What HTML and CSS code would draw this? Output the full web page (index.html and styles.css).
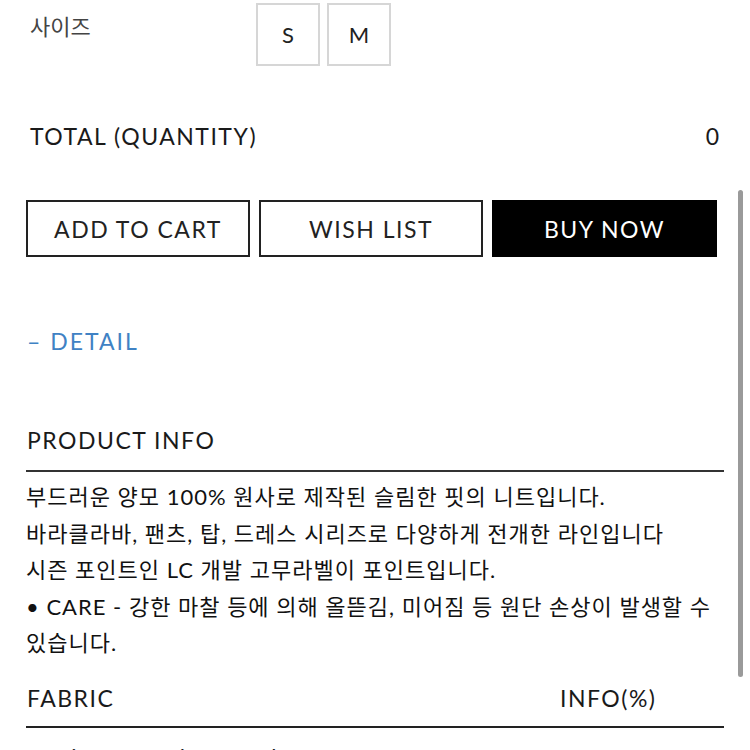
FILE: index.html
```html
<!DOCTYPE html>
<html lang="ko">
<head>
<meta charset="utf-8">
<link rel="stylesheet" href="styles.css">
</head>
<body>
<div class="page">
  <div class="size-row">
    <div class="size-label">사이즈</div>
    <div class="size-options">
      <div class="size-box">S</div>
      <div class="size-box">M</div>
    </div>
  </div>

  <div class="total-row">
    <span class="total-label">TOTAL (QUANTITY)</span>
    <span class="total-value">0</span>
  </div>

  <div class="actions">
    <div class="btn">ADD TO CART</div>
    <div class="btn">WISH LIST</div>
    <div class="btn btn-dark">BUY NOW</div>
  </div>

  <div class="detail-toggle">– DETAIL</div>

  <div class="section-head">PRODUCT INFO</div>
  <div class="info-text">
    <p>부드러운 양모 100% 원사로 제작된 슬림한 핏의 니트입니다.</p>
    <p>바라클라바, 팬츠, 탑, 드레스 시리즈로 다양하게 전개한 라인입니다</p>
    <p>시즌 포인트인 LC 개발 고무라벨이 포인트입니다.</p>
    <p>• CARE - 강한 마찰 등에 의해 올뜯김, 미어짐 등 원단 손상이 발생할 수 있습니다.</p>
  </div>

  <div class="fabric-head">
    <span>FABRIC</span>
    <span class="fabric-info">INFO(%)</span>
  </div>
  <div class="fabric-row">
    <span>Merino Extrafine Wool</span>
    <span class="fabric-info">100</span>
  </div>
</div>
<div class="scrollbar"></div>
</body>
</html>
```

FILE: styles.css
```css
html, body {
  margin: 0;
  padding: 0;
  background: #fff;
  overflow: hidden;
}
body {
  font-family: Lato, "Noto Sans CJK KR", sans-serif;
  color: #1a1a1a;
  width: 750px;
  height: 750px;
  position: relative;
}
.page {
  padding: 3px 26px 0 26px;
  width: 698px;
}
.size-row {
  display: flex;
  align-items: flex-start;
}
.size-label {
  width: 226px;
  padding-left: 4px;
  padding-top: 12px;
  font-size: 22px;
  color: #444;
  line-height: 24px;
}
.size-options {
  display: flex;
  gap: 7px;
}
.size-box {
  width: 60px;
  height: 59px;
  border: 2px solid #d6d6d6;
  display: flex;
  align-items: center;
  justify-content: center;
  font-size: 22px;
  color: #222;
}
.total-row {
  display: flex;
  justify-content: space-between;
  margin-top: 58px;
  padding: 0 5px 0 4px;
  font-size: 23px;
  line-height: 24px;
  letter-spacing: 1.5px;
  color: #1a1a1a;
}
.total-value {
  letter-spacing: 0;
}
.actions {
  display: grid;
  grid-template-columns: 224px 224px 225px;
  gap: 9px;
  margin-top: 52px;
  width: 690px;
}
.btn {
  height: 53px;
  border: 2px solid #222;
  display: flex;
  align-items: center;
  justify-content: center;
  font-size: 23px;
  letter-spacing: 1.5px;
  color: #222;
}
.btn-dark {
  background: #000;
  border-color: #000;
  color: #fff;
}
.detail-toggle {
  margin-top: 72px;
  padding-left: 1px;
  font-size: 23px;
  line-height: 24px;
  letter-spacing: 2px;
  color: #3f82c4;
}
.section-head {
  margin-top: 75px;
  padding-left: 1px;
  font-size: 23px;
  line-height: 24px;
  letter-spacing: 1.5px;
  color: #1a1a1a;
  padding-bottom: 18px;
  border-bottom: 2px solid #333;
}
.info-text {
  padding-top: 7px;
  font-size: 22px;
  line-height: 36.5px;
  letter-spacing: 1px;
  color: #111;
}
.info-text p {
  margin: 0;
}
.fabric-head {
  display: flex;
  margin-top: 24px;
  font-size: 23px;
  line-height: 24px;
  letter-spacing: 1.5px;
  padding: 0 0 16px 1px;
  border-bottom: 2px solid #222;
}
.fabric-row {
  display: flex;
  padding: 17px 0 0 1px;
  font-size: 22px;
  line-height: 24px;
  letter-spacing: 1.5px;
}
.fabric-info {
  margin-left: auto;
  width: 164px;
}
.scrollbar {
  position: absolute;
  left: 738px;
  top: 190px;
  width: 5px;
  height: 487px;
  border-radius: 3px;
  background: #9a9a9a;
}
```
